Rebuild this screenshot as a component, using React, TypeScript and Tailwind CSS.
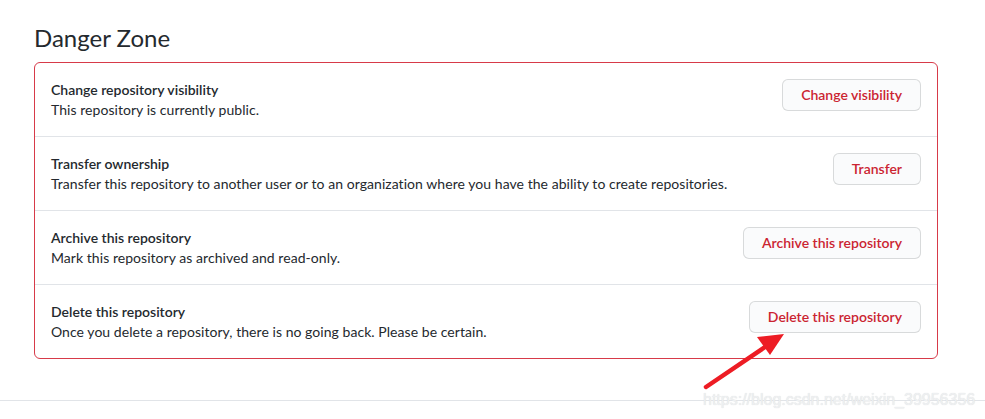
import React from "react";

const rows = [
  { title: "Change repository visibility", desc: "This repository is currently public.", btn: "Change visibility" },
  { title: "Transfer ownership", desc: "Transfer this repository to another user or to an organization where you have the ability to create repositories.", btn: "Transfer" },
  { title: "Archive this repository", desc: "Mark this repository as archived and read-only.", btn: "Archive this repository" },
  { title: "Delete this repository", desc: "Once you delete a repository, there is no going back. Please be certain.", btn: "Delete this repository" },
];

export default function App() {
  return (
    <div className="relative w-[985px] h-[419px] bg-white overflow-hidden text-[#24292e]" style={{ fontFamily: 'Lato, "Noto Sans", sans-serif' }}>
      <div className="pl-[34px] pr-[47px] pt-[23px]">
        <h2 className="text-[24px] leading-[30px] font-normal mb-[9px]">Danger Zone</h2>
        <div className="border border-[#d73a49] rounded-[6px]">
          {rows.map((r, i) => (
            <div key={i} className={`flex items-start justify-between px-[16px] pt-[16px] pb-[16px] ${i > 0 ? "border-t border-[#e1e4e8]" : ""}`}>
              <div>
                <div className="text-[14px] leading-[21px] font-semibold">{r.title}</div>
                <div className="text-[14px] leading-[20px] tracking-[0.05px]">{r.desc}</div>
              </div>
              <button className="h-[32px] px-[18px] rounded-[6px] border border-[rgba(27,31,35,0.15)] bg-[#fafbfc] text-[#cb2431] text-[14px] font-semibold leading-[20px] whitespace-nowrap">
                {r.btn}
              </button>
            </div>
          ))}
        </div>
      </div>
      <div className="absolute left-0 right-0 top-[400px] h-px bg-[#e1e4e8]" />
      <div className="absolute left-[703px] top-[390px] text-[16px] leading-[20px] text-[#eef0f2]" style={{ fontFamily: '"Liberation Sans", sans-serif', textShadow: "0 0 1px #d8d8d8" }}>
        https://blog.csdn.net/weixin_39956356
      </div>
      <svg className="absolute left-0 top-0" width="985" height="419" viewBox="0 0 985 419">
        <line x1="706" y1="387" x2="768" y2="345" stroke="#ed1c24" strokeWidth="4.5" strokeLinecap="round" />
        <polygon points="784,334 757,337 770,355" fill="#ed1c24" />
      </svg>
    </div>
  );
}
